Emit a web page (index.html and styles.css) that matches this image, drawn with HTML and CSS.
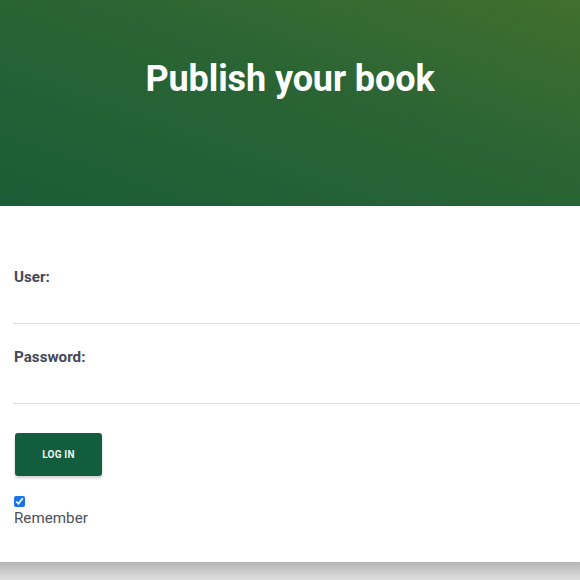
FILE: index.html
```html
<!DOCTYPE html>
<html lang="en">
<head>
<meta charset="utf-8">
<title>Publish your book</title>
<link rel="stylesheet" href="styles.css">
</head>
<body>
<header class="hero">
  <h1 class="hero-title">Publish your book</h1>
</header>
<main class="card">
  <form class="login-form">
    <div class="field">
      <label class="field-label" for="user">User:</label>
      <input class="field-input" id="user" type="text">
    </div>
    <div class="field">
      <label class="field-label" for="password">Password:</label>
      <input class="field-input" id="password" type="password">
    </div>
    <button class="login-btn" type="button">LOG IN</button>
    <div class="remember">
      <input class="remember-check" id="remember" type="checkbox" checked>
      <label class="remember-label" for="remember">Remember</label>
    </div>
  </form>
</main>
<div class="page-bottom"></div>
</body>
</html>
```
FILE: styles.css
```css
html, body {
  margin: 0;
  padding: 0;
}
body {
  font-family: Roboto, "Liberation Sans", sans-serif;
  background: #dcdcdc;
  width: 580px;
  height: 580px;
  overflow: hidden;
}
.hero {
  height: 206px;
  background: linear-gradient(to top right, #1b5d36 0%, #2a6434 55%, #416f2e 100%);
  display: flex;
  justify-content: center;
  box-sizing: border-box;
  padding-top: 57px;
}
.hero-title {
  margin: 0;
  color: #ffffff;
  font-size: 36px;
  font-weight: 700;
  line-height: 44px;
  letter-spacing: -0.1px;
}
.card {
  background: #ffffff;
  height: 356px;
  box-sizing: border-box;
  padding: 62px 0 0 13px;
}
.login-form {
  display: flex;
  flex-direction: column;
  align-items: flex-start;
}
.field {
  align-self: stretch;
  display: flex;
  flex-direction: column;
  margin-bottom: 24px;
}
.field-label {
  display: block;
  padding-left: 1px;
  font-size: 15.2px;
  font-weight: 700;
  line-height: 19px;
  color: #454857;
}
.field-input {
  height: 37px;
  border: none;
  border-bottom: 1px solid #dedede;
  padding: 0;
  margin: 0;
  outline: none;
  background: transparent;
  box-sizing: border-box;
}
.login-btn {
  margin-top: 5px;
  margin-left: 2px;
  width: 87px;
  height: 43px;
  border: none;
  border-radius: 3px;
  background: #125d3e;
  color: #eef4ef;
  font-family: Roboto, "Liberation Sans", sans-serif;
  font-size: 10px;
  font-weight: 700;
  letter-spacing: 0.2px;
  box-shadow: 0 2px 3px rgba(0, 0, 0, 0.2);
  padding: 0;
}
.remember {
  margin-top: 20px;
  display: flex;
  flex-direction: column;
  align-items: flex-start;
}
.remember-check {
  width: 11px;
  height: 11px;
  margin: 0 0 0 1px;
  accent-color: #1a73e8;
}
.remember-label {
  font-size: 15.2px;
  line-height: 19px;
  color: #4f4f57;
  margin-top: 2px;
  padding-left: 1px;
}
.page-bottom {
  height: 18px;
  background: linear-gradient(to bottom, #b5b5b5, #dedede);
}
```
